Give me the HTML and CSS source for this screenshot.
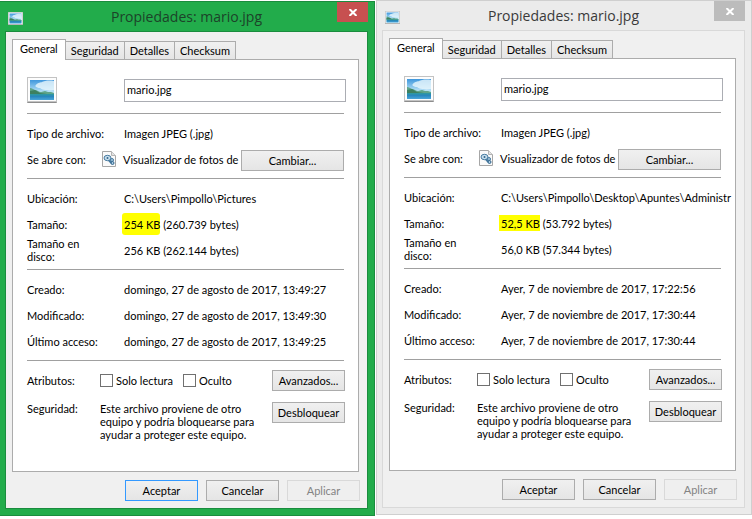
FILE: index.html
```html
<!DOCTYPE html>
<html lang="es">
<head>
<meta charset="utf-8">
<title>Propiedades: mario.jpg</title>
<link rel="stylesheet" href="styles.css">
</head>
<body>
<svg class="defs" aria-hidden="true">
  <defs>
    <linearGradient id="sky" x1="0" y1="0" x2="0" y2="1">
      <stop offset="0" stop-color="#3f97dc"/><stop offset=".6" stop-color="#b9e3f7"/><stop offset="1" stop-color="#d4f0f8"/>
    </linearGradient>
    <linearGradient id="sea" x1="0" y1="0" x2="0" y2="1">
      <stop offset="0" stop-color="#2f9a9d"/><stop offset=".4" stop-color="#2786bd"/><stop offset="1" stop-color="#4aa5d8"/>
    </linearGradient>
    <symbol id="photo" viewBox="0 0 30 26">
      <rect x="0" y="1" width="30" height="25" rx="1" fill="#8d8d8d"/>
      <rect x=".5" y=".5" width="29" height="24" fill="#fdfdfd" stroke="#c3c3c3"/>
      <rect x="3" y="3" width="24" height="20" fill="url(#sky)"/>
      <path d="M9 8c2-3 5-2 6-3 2-1 7-2 12-1v9c-5 1-12 0-14-2-3 0-6-2-4-3z" fill="#eaf7fd" opacity=".8"/>
      <path d="M3 11c2 0 3 1 5 2 2 0 4 2 6 2l4-1 3 1 3 0 3 1v2H3z" fill="#5fa58a"/>
      <path d="M3 14l5-1 5 3 7 1H3z" fill="#3d8060"/>
      <rect x="3" y="17" width="24" height="6" fill="url(#sea)"/>
    </symbol>
    <symbol id="app" viewBox="0 0 14 16">
      <path d="M.5.5h9l4 4v11H.5z" fill="#fafafa" stroke="#a6a6a6"/>
      <path d="M9.500.500v4h4" fill="#e4e4e4" stroke="#b5b5b5"/>
      <ellipse cx="5.500" cy="7" rx="3.500" ry="2.700" fill="#c9dfed" stroke="#45799f"/>
      <circle cx="5.500" cy="7" r="1" fill="#31658d"/>
      <path d="M7 9.500l3 3" stroke="#45799f" stroke-width="2"/>
      <circle cx="10" cy="9" r="1.500" fill="#a9cbe2" stroke="#45799f"/>
      <circle cx="10.500" cy="12" r="1.500" fill="#a9cbe2" stroke="#31658d"/>
    </symbol>
  </defs>
</svg>
<main class="desktop">
  <section class="window active">
    <header class="titlebar">
      <svg class="title-icon"><use href="#photo"/></svg>
      <h1>Propiedades: mario.jpg</h1>
      <button class="close" aria-label="Cerrar"><svg viewBox="0 0 8 7"><path d="M.5 0l7 7M7.500 0l-7 7"/></svg></button>
    </header>
    <div class="client">
      <nav class="tabs">
        <button class="tab selected">General</button><button class="tab">Seguridad</button><button class="tab">Detalles</button><button class="tab">Checksum</button>
      </nav>
      <div class="panel">
        <div class="head">
          <svg class="file-icon"><use href="#photo"/></svg>
          <input class="name" type="text" value="mario.jpg" aria-label="Nombre">
        </div>
        <hr>
        <div class="row"><span class="label">Tipo de archivo:</span><span class="value">Imagen JPEG (.jpg)</span></div>
        <div class="row"><span class="label short">Se abre con:</span><svg class="app-icon"><use href="#app"/></svg><span class="value">Visualizador de fotos de</span><button class="btn wide">Cambiar...</button></div>
        <hr>
        <div class="row"><span class="label">Ubicación:</span><span class="value">C:\Users\Pimpollo\Pictures</span></div>
        <div class="row"><span class="label">Tamaño:</span><span class="value"><mark class="tall">254 KB</mark> (260.739 bytes)</span></div>
        <div class="row"><span class="label">Tamaño en<br>disco:</span><span class="value">256 KB (262.144 bytes)</span></div>
        <hr>
        <div class="row"><span class="label">Creado:</span><span class="value">domingo, 27 de agosto de 2017, 13:49:27</span></div>
        <div class="row"><span class="label">Modificado:</span><span class="value">domingo, 27 de agosto de 2017, 13:49:30</span></div>
        <div class="row"><span class="label">Último acceso:</span><span class="value">domingo, 27 de agosto de 2017, 13:49:25</span></div>
        <hr>
        <div class="row"><span class="label attr">Atributos:</span><div class="checks"><label><input type="checkbox">Solo lectura</label><label><input type="checkbox">Oculto</label></div><button class="btn">Avanzados...</button></div>
        <div class="row security"><span class="label attr">Seguridad:</span><p>Este archivo proviene de otro equipo y podría bloquearse para ayudar a proteger este equipo.</p><button class="btn">Desbloquear</button></div>
      </div>
      <footer class="actions">
        <button class="btn default">Aceptar</button><button class="btn">Cancelar</button><button class="btn" disabled>Aplicar</button>
      </footer>
    </div>
  </section>

  <section class="window inactive">
    <header class="titlebar">
      <svg class="title-icon"><use href="#photo"/></svg>
      <h1>Propiedades: mario.jpg</h1>
      <button class="close" aria-label="Cerrar"><svg viewBox="0 0 8 7"><path d="M.5 0l7 7M7.500 0l-7 7"/></svg></button>
    </header>
    <div class="client">
      <nav class="tabs">
        <button class="tab selected">General</button><button class="tab">Seguridad</button><button class="tab">Detalles</button><button class="tab">Checksum</button>
      </nav>
      <div class="panel">
        <div class="head">
          <svg class="file-icon"><use href="#photo"/></svg>
          <input class="name" type="text" value="mario.jpg" aria-label="Nombre">
        </div>
        <hr>
        <div class="row"><span class="label">Tipo de archivo:</span><span class="value">Imagen JPEG (.jpg)</span></div>
        <div class="row"><span class="label short">Se abre con:</span><svg class="app-icon"><use href="#app"/></svg><span class="value">Visualizador de fotos de</span><button class="btn wide">Cambiar...</button></div>
        <hr>
        <div class="row"><span class="label">Ubicación:</span><span class="value">C:\Users\Pimpollo\Desktop\Apuntes\Administr</span></div>
        <div class="row"><span class="label">Tamaño:</span><span class="value"><mark>52,5 KB</mark> (53.792 bytes)</span></div>
        <div class="row"><span class="label">Tamaño en<br>disco:</span><span class="value">56,0 KB (57.344 bytes)</span></div>
        <hr>
        <div class="row"><span class="label">Creado:</span><span class="value">Ayer, 7 de noviembre de 2017, 17:22:56</span></div>
        <div class="row"><span class="label">Modificado:</span><span class="value">Ayer, 7 de noviembre de 2017, 17:30:44</span></div>
        <div class="row"><span class="label">Último acceso:</span><span class="value">Ayer, 7 de noviembre de 2017, 17:30:44</span></div>
        <hr>
        <div class="row"><span class="label attr">Atributos:</span><div class="checks"><label><input type="checkbox">Solo lectura</label><label><input type="checkbox">Oculto</label></div><button class="btn">Avanzados...</button></div>
        <div class="row security"><span class="label attr">Seguridad:</span><p>Este archivo proviene de otro equipo y podría bloquearse para ayudar a proteger este equipo.</p><button class="btn">Desbloquear</button></div>
      </div>
      <footer class="actions">
        <button class="btn">Aceptar</button><button class="btn">Cancelar</button><button class="btn" disabled>Aplicar</button>
      </footer>
    </div>
  </section>
</main>
</body>
</html>
```
FILE: styles.css
```css
* { box-sizing: border-box; }
body {
  margin: 0;
  background: #fff;
  color: #000;
  font: 11px/13px Lato, "Liberation Sans", sans-serif;
}
button, input { font: inherit; color: inherit; margin: 0; }
.defs { position: absolute; width: 0; height: 0; }

.desktop {
  display: grid;
  grid-template-columns: 1fr 1fr;
  align-items: start;
}
.window { min-width: 0; border: 1px solid; }
.active {
  margin: 1px 1px 0 0;
  padding: 0 6px 6px 5px;
  border-color: #1a8c3e;
  border-left: 0;
  background: #22ac4b;
}
.inactive {
  padding: 0 6px 6px 5px;
  border-color: #cfcfcf;
  background: #ebebeb;
}

.titlebar {
  display: grid;
  grid-template-columns: 31px 1fr 31px;
  align-items: center;
  height: 29px;
}
.title-icon { width: 15px; height: 13px; margin: 3px 0 0 3px; }
h1 {
  margin: 0;
  color: #3a3a3a;
  font: 14px/20px "Open Sans", "Noto Sans", sans-serif;
  text-align: center;
  white-space: nowrap;
}
.active h1 { color: #1c4329; }
.close {
  align-self: start;
  display: grid;
  place-items: center;
  height: 20px;
  padding: 0;
  border: 0;
  background: #bcbcbc;
}
.active .close { background: #c75050; }
.close svg { width: 8px; height: 7px; }
.close path { stroke: #fff; stroke-width: 2; fill: none; }

.client {
  padding: 7px 7px 7px 6px;
  border: 1px solid #d9d9d9;
  background: #f0f0f0;
}
.active .client { border-color: #1a8c3e; }

.tabs { display: flex; align-items: flex-end; height: 20px; }
.tab {
  height: 18px;
  padding: 0 5px;
  border: 1px solid #acacac;
  border-left-width: 0;
  border-bottom: 0;
  background: linear-gradient(#f0f0f0, #e5e5e5);
}
.tab.selected {
  position: relative;
  z-index: 1;
  height: 21px;
  margin-bottom: -1px;
  padding: 0 7px 3px;
  border-left-width: 1px;
  background: #fff;
}
.panel {
  margin-right: 1px;
  padding: 17px 12px 30px 14px;
  border: 1px solid #acacac;
  background: #fff;
}
.head { display: flex; height: 30px; }
.file-icon { width: 30px; height: 26px; margin-right: 67px; }
.name {
  flex: 1;
  min-width: 0;
  height: 23px;
  margin-top: 2px;
  padding: 0 2px 2px;
  border: 1px solid #abadb3;
  background: #fff;
}
hr { height: 1px; margin: 6px 2px 6px 0; border: 0; background: #a0a0a0; }

.row { display: flex; align-items: center; height: 26px; white-space: nowrap; }
.label { flex: 0 0 97px; }
.label.short { flex-basis: 75px; }
.label.attr { flex-basis: 73px; }
.value { flex: 1; min-width: 0; }
.app-icon { width: 14px; height: 16px; margin-right: 7px; }
mark {
  display: inline-block;
  margin-left: -2px;
  padding: 2px 0 1px 2px;
  background: #ff0;
  color: inherit;
}
mark.tall { padding: 5px 0 4px 2px; border-radius: 3px; }

.btn {
  flex: none;
  width: 73px;
  height: 21px;
  padding: 0;
  border: 1px solid #acacac;
  background: linear-gradient(#f0f0f0, #e5e5e5);
}
.btn.wide { width: 103px; margin: 2px 2px 0 0; }
.btn.default { border-color: #3399ff; }
.btn:disabled { border-color: #d9d9d9; background: #efefef; color: #838383; }

.checks { display: flex; flex: 1; gap: 10px; }
.checks label { display: flex; align-items: center; gap: 3px; }
.checks input {
  width: 13px;
  height: 13px;
  margin: 0;
  border: 1px solid #707070;
  background: #fff;
  appearance: none;
}
.security { align-items: flex-start; height: auto; margin-top: 9px; white-space: normal; }
.security p { flex: 1; margin: 0; padding-right: 4px; }
.row > .btn:last-child:not(.wide) { margin-right: 1px; }

.actions { display: flex; justify-content: flex-end; gap: 8px; padding-top: 8px; }
```
